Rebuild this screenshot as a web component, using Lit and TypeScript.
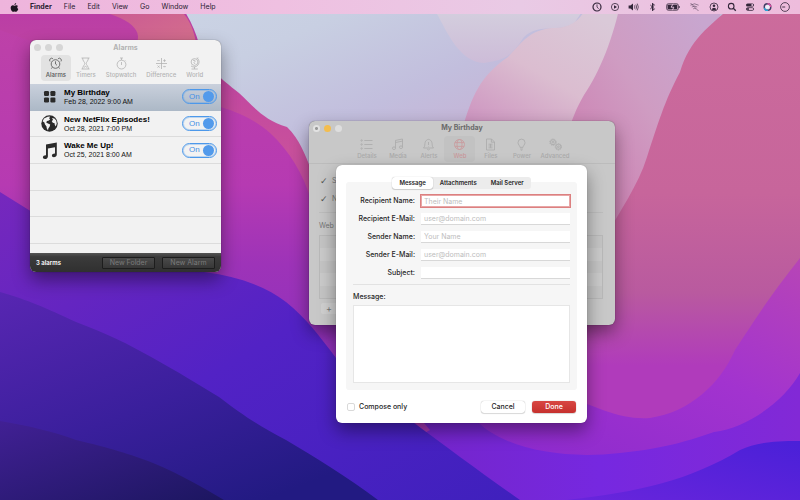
import { LitElement, html, svg, css } from "lit";
import { customElement, state } from "lit/decorators.js";
import { classMap } from "lit/directives/class-map.js";

const toolIcons: Record<string, unknown> = {
  alarms: svg`<circle cx="6.5" cy="7" r="4.3"/><path d="M6.5 4.3V7L8 8.3M3.4 10.2L2.4 11.6M9.6 10.2L10.6 11.6M1 4.4A2 2 0 0 1 3.9 1.7M9.1 1.7A2 2 0 0 1 12 4.4"/>`,
  timers: svg`<path d="M2.5 1H10.5M2.5 12H10.5M3.6 1C3.6 4 5.8 5 5.8 6.5C5.8 8 3.6 9 3.6 12M9.4 1C9.4 4 7.2 5 7.2 6.5C7.2 8 9.4 9 9.4 12M5 10.4L6.5 9.4L8 10.4"/>`,
  stopwatch: svg`<circle cx="6.5" cy="7.6" r="4.4"/><path d="M6.5 5V8M5 1H8M6.5 1V3M10 3.4L10.8 4.2"/>`,
  difference: svg`<path d="M6.5 1V12M1 6.5H12M2.2 3.6H4.8M8.2 3.6H10.8M9.5 2.3V4.9M2.6 8.6L4.6 10.6M4.6 8.6L2.6 10.6M8.2 9.6H10.8M9.5 8.3V8.4M9.5 10.9V11"/>`,
  world: svg`<circle cx="6.5" cy="5" r="3.4"/><path d="M9 .8A5 5 0 0 1 3 9M10 .5L9 1.7M6.5 9.8V12M3.5 12H9.8M5 3.5L6.3 3L7.2 4.2L6 5.4L7 7"/>`,
  details: svg`<path d="M4.3 2.5H12.5M4.3 6.5H12.5M4.3 10.5H12.5"/><circle cx="1.6" cy="2.5" r=".7"/><circle cx="1.6" cy="6.5" r=".7"/><circle cx="1.6" cy="10.5" r=".7"/>`,
  media: svg`<path d="M4.5 9.8V2.4L11.5 1V8.8M4.5 4.5L11.5 3.1"/><ellipse cx="3" cy="10.2" rx="1.6" ry="1.3"/><ellipse cx="10" cy="9.2" rx="1.6" ry="1.3"/>`,
  alerts: svg`<path d="M1.5 10C3.2 8.6 2.6 5.8 3.2 4.2C3.7 2.7 5 1.4 6.5 1.4S9.3 2.7 9.8 4.2C10.4 5.8 9.8 8.6 11.5 10ZM5.2 11.2Q6.5 12.6 7.8 11.2M6.5 4V7M6.5 8.2V8.6"/>`,
  web: svg`<circle cx="6.5" cy="6.5" r="5"/><ellipse cx="6.5" cy="6.5" rx="2.5" ry="5"/><path d="M2 4.6H11M2 8.4H11"/>`,
  files: svg`<path d="M2.5 1H7.6L10.5 4V12H2.5ZM7.4 1V4.2H10.5M4.5 6.2H8.5M4.5 8H8.5M4.5 9.8H8.5M6.5 6V9.8"/>`,
  power: svg`<path d="M5 9.4C5 7.6 3 6.8 3 4.6A3.5 3.5 0 0 1 10 4.6C10 6.8 8 7.6 8 9.4ZM5.2 11H7.8M5.8 12.2H7.2"/>`,
  advanced: svg`<circle cx="4" cy="4.2" r="2.5"/><circle cx="4" cy="4.2" r="3.2" stroke-dasharray="1.2 .8"/><circle cx="4" cy="4.2" r=".9"/><circle cx="9.4" cy="8.8" r="2.5"/><circle cx="9.4" cy="8.8" r="3.2" stroke-dasharray="1.2 .8"/><circle cx="9.4" cy="8.8" r=".9"/>`,
};

const alarmIcons: Record<string, unknown> = {
  grid: svg`<rect x="3" y="3" width="5" height="5" rx="1.2"/><rect x="9.4" y="3" width="5" height="5" rx="1.2"/><rect x="3" y="9.4" width="5" height="5" rx="1.2"/><rect x="9.4" y="9.4" width="5" height="5" rx="1.2"/>`,
  globe: svg`<circle cx="8.5" cy="8.5" r="8.2"/><path fill="#f2f2f2" d="M3 3.6L6.6 1.8L9 1.6L8.2 3.4L9.2 4.4L7.4 5.8L6 6L5.2 7.6L7 8.4L9.2 9.6L8.6 11.8L7.4 13.2L7 15.6L5.8 13.6L5.4 11.2L4 9.6L3.4 7.4L1.6 6.2ZM11 3L13.4 3.4L15.2 5.6L15.8 8.6L14.8 11.4L13.8 10L13.6 8.2L11.8 7.8L10.8 6.2L12 4.8Z"/>`,
  note: svg`<path d="M5 2.4L15.8.4V12.4C15.8 14.2 14.3 15.2 12.9 15.2C11.6 15.2 10.9 14.4 10.9 13.5C10.9 12.2 12.3 11.3 14 11.4V5.2L6.9 6.6V14.4C6.9 16.1 5.3 17 3.9 17C2.6 17 1.9 16.3 1.9 15.3C1.9 14 3.3 13.1 5 13.2Z"/>`,
};

interface StatusIcon { w: number; art: unknown }
const statusIcons: StatusIcon[] = [
  { w: 10, art: svg`<circle cx="5" cy="5" r="4" stroke-width="1.2"/><path d="M5 2.4V5L6.6 6.8"/>` },
  { w: 10, art: svg`<circle cx="5" cy="5" r="3.6"/><path class="solid" d="M4 3.3L7 5L4 6.7Z"/>` },
  { w: 11, art: svg`<path class="solid" d="M.6 3.6H2.4L5 1.4V8.6L2.4 6.4H.6Z"/><path d="M6.4 3.4Q7.4 5 6.4 6.6M7.9 2.5Q9.4 5 7.9 7.5M9.3 1.6Q11.3 5 9.3 8.4" stroke-width=".7"/>` },
  { w: 11, art: svg`<path d="M3.4 3.1L7.4 6.8L5.5 8.8V1.2L7.4 3.2L3.4 6.9" stroke-width="1"/>` },
  { w: 14, art: svg`<rect x=".7" y="1.8" width="11.6" height="6.4" rx="1.6" stroke-width=".8"/><rect class="solid" x="1.6" y="2.7" width="9.6" height="4.6" rx=".6"/><path d="M13.3 4V6"/><path d="M7.2 1.8L5 5.2H7.8L6.4 8.2" stroke="#ecc6e2" stroke-width=".9"/>` },
  { w: 13, art: svg`<g opacity=".6"><path d="M2.4 3.2Q6.5 .4 10.6 3.2M3.8 5Q6.5 3.2 9.2 5M5.2 6.8Q6.5 6 7.8 6.8M2.5 1L10.5 9"/></g>` },
  { w: 10, art: svg`<circle cx="5" cy="5" r="4"/><circle class="solid" cx="5" cy="3.8" r="1.3"/><path class="solid" d="M2.8 7.6Q3 5.8 5 5.8T7.2 7.6L5 8.6Z"/>` },
  { w: 10, art: svg`<circle cx="4.2" cy="4.2" r="2.8" stroke-width="1.1"/><path d="M6.3 6.3L8.8 8.8" stroke-width="1.3"/>` },
  { w: 10, art: svg`<rect class="solid" x="1" y="1.4" width="8" height="3.2" rx="1.6"/><circle cx="7.2" cy="3" r=".9" fill="#ecc6e2" stroke="none"/><rect x="1.4" y="5.7" width="7.2" height="2.7" rx="1.3"/><circle class="solid" cx="3" cy="7" r="1"/>` },
  { w: 9, art: svg`<circle cx="4.5" cy="5" r="3.3" stroke="#3d3d63" stroke-width="1.4"/><path d="M4.5 1.7A3.3 3.3 0 0 1 7.8 5" stroke="#d84fa0" stroke-width="1.4"/><path d="M1.3 6A3.3 3.3 0 0 0 5 8.3" stroke="#23a6d8" stroke-width="1.4"/><circle cx="4.5" cy="5" r="2" fill="#e8f4fb" stroke="none"/>` },
  { w: 10, art: svg`<circle cx="5" cy="5" r="4.4"/><path d="M2.2 5H5.2" stroke-width=".9"/>` },
];

const wallpaper = svg`
  <defs>
    <linearGradient id="sky" x1="0" y1="0" x2=".7" y2="1"><stop offset="0" stop-color="#ced8e7"/><stop offset=".22" stop-color="#c8cfe2"/><stop offset=".36" stop-color="#c2bedd"/><stop offset=".62" stop-color="#cba2ca"/></linearGradient>
    <linearGradient id="wedge" x1="0" y1="0" x2="0" y2="1"><stop offset="0" stop-color="#d5d2df"/><stop offset="1" stop-color="#cdbcd8"/></linearGradient>
    <linearGradient id="blush" x1=".6" y1="0" x2=".2" y2="1"><stop offset="0" stop-color="#dac9d8"/><stop offset=".3" stop-color="#dbbdd0"/><stop offset=".6" stop-color="#cd94c0"/></linearGradient>
    <linearGradient id="rose" x1=".8" y1="0" x2=".2" y2="1"><stop offset="0" stop-color="#c8a6cf"/><stop offset=".3" stop-color="#cf9cc2"/><stop offset=".7" stop-color="#cb78ad"/><stop offset="1" stop-color="#c065a0"/></linearGradient>
    <linearGradient id="ruby" x1="0" y1="0" x2="0" y2="1"><stop offset="0" stop-color="#cc6c9c"/><stop offset=".45" stop-color="#c7659b"/><stop offset=".68" stop-color="#b95a9f"/><stop offset=".85" stop-color="#b03bbb"/></linearGradient>
    <linearGradient id="orchid" x1="1" y1="0" x2=".3" y2="1"><stop offset="0" stop-color="#b745b6"/><stop offset=".45" stop-color="#a233cf"/><stop offset="1" stop-color="#8b2acd"/></linearGradient>
    <linearGradient id="violet" x1="0" y1="0" x2="1" y2="0"><stop offset="0" stop-color="#7425c8"/><stop offset=".5" stop-color="#7628e0"/><stop offset="1" stop-color="#8229d6"/></linearGradient>
    <linearGradient id="indigo" x1="0" y1="1" x2="1" y2="0"><stop offset="0" stop-color="#6925dc"/><stop offset="1" stop-color="#4a20d8"/></linearGradient>
    <linearGradient id="magenta" x1="0" y1="0" x2="0" y2="1"><stop offset="0" stop-color="#b93ca6"/><stop offset=".3" stop-color="#c8509c"/><stop offset="1" stop-color="#9c31ba"/></linearGradient>
    <linearGradient id="fuchsia" x1="0" y1="0" x2="0" y2="1"><stop offset="0" stop-color="#bd41a8"/><stop offset=".33" stop-color="#b63ab2"/><stop offset=".5" stop-color="#9d33b8"/><stop offset="1" stop-color="#7e2cc4"/></linearGradient>
    <linearGradient id="coral" x1="0" y1="0" x2="1" y2="1"><stop offset="0" stop-color="#cb5b93"/><stop offset="1" stop-color="#d6748a"/></linearGradient>
    <linearGradient id="blue1" x1="0" y1="0" x2="1" y2="1"><stop offset="0" stop-color="#7628bd"/><stop offset=".5" stop-color="#5222c5"/><stop offset="1" stop-color="#3f20bd"/></linearGradient>
    <linearGradient id="blue2" x1="0" y1="0" x2=".7" y2="1"><stop offset="0" stop-color="#5826b2"/><stop offset=".55" stop-color="#3a1f9c"/><stop offset="1" stop-color="#221a82"/></linearGradient>
    <linearGradient id="blue3" x1="0" y1="0" x2="1" y2="1"><stop offset="0" stop-color="#412094"/><stop offset="1" stop-color="#1c1660"/></linearGradient>
  </defs>
  <rect width="800" height="500" fill="url(#sky)"/>
  <path fill="url(#wedge)" d="M430 0L437 14C448 34 460 62 484 63C504 60 510 58 524 37C540 22 560 34 575 22L590 0Z"/>
  <path fill="url(#blush)" d="M590 0C580 24 568 28 552 28C530 30 522 42 508 57C480 76 472 96 462 130V260H640V0Z"/>
  <path fill="url(#rose)" d="M621 0C614 36 600 72 584 95C574 112 568 130 560 160V420H720V0Z"/>
  <path fill="url(#ruby)" d="M740 0C706 28 690 40 680 72C664 102 658 124 647 157C638 186 620 210 604 240C585 290 570 340 560 420L800 430V0Z"/>
  <path fill="url(#orchid)" d="M800 258C770 296 756 318 735 350C720 384 690 412 650 418C620 420 600 408 560 394L470 400V500H800Z"/>
  <path fill="url(#violet)" d="M800 373C785 400 748 428 714 432C690 440 668 448 620 453C560 460 500 448 474 418L400 410V500H800Z"/>
  <path fill="url(#indigo)" d="M800 441C770 441 755 443 740 450C690 480 640 492 566 500H800Z"/>
  <path fill="url(#magenta)" d="M0 0H176C192 18 198 38 204 62C220 78 230 86 239 93C255 108 264 120 287 127C300 140 304 152 312 172C340 240 350 340 430 430L300 500H0Z"/>
  <path fill="url(#coral)" d="M120 14H184C192 24 196 36 199 60H120C150 40 140 24 110 14Z"/>
  <path fill="url(#fuchsia)" d="M0 30C80 60 160 80 221 107C250 116 268 128 284 148C300 168 310 190 316 220C332 310 360 380 440 445L300 500H0Z"/>
  <path fill="url(#blue1)" d="M0 192C60 230 120 268 204 272C236 276 266 286 286 302C306 318 318 334 336 358C362 388 390 404 414 423C448 448 480 472 520 500H0Z"/>
  <path fill="url(#blue2)" d="M0 292C28 300 46 308 76 322C108 334 128 344 153 358C178 372 198 384 219 397C244 416 262 428 286 440C316 458 346 476 378 500H0Z"/>
  <path fill="url(#blue3)" d="M0 421C30 426 54 432 76 440C110 448 130 454 153 463C180 474 204 488 224 500H0Z"/>
`;

const toolIcon = (name: string) =>
  html`<svg class="tool-icon" viewBox="0 0 13 13" aria-hidden="true">${toolIcons[name]}</svg>`;

@customElement("app-root")
export class AppRoot extends LitElement {
  @state() private mailTab = "Message";

  private menus = ["File", "Edit", "View", "Go", "Window", "Help"];
  private alarmTools = ["Alarms", "Timers", "Stopwatch", "Difference", "World"];
  private eventTools = ["Details", "Media", "Alerts", "Web", "Files", "Power", "Advanced"];
  private alarms = [
    { icon: "grid", name: "My Birthday", when: "Feb 28, 2022 9:00 AM" },
    { icon: "globe", name: "New NetFlix Episodes!", when: "Oct 28, 2021 7:00 PM" },
    { icon: "note", name: "Wake Me Up!", when: "Oct 25, 2021 8:00 AM" },
  ];
  private fields = [
    { id: "rname", label: "Recipient Name:", hint: "Their Name" },
    { id: "rmail", label: "Recipient E-Mail:", hint: "user@domain.com" },
    { id: "sname", label: "Sender Name:", hint: "Your Name" },
    { id: "smail", label: "Sender E-Mail:", hint: "user@domain.com" },
    { id: "subject", label: "Subject:", hint: "" },
  ];

  static styles = css`
    :host { display: block; font: 7px/10px Inter, "Liberation Sans", sans-serif; color: #222; }
    * { box-sizing: border-box; }
    button, input, textarea { font: inherit; color: inherit; margin: 0; padding: 0; border: 0; background: none; outline: 0; }
    .desktop { position: relative; min-height: 100vh; overflow: hidden; }
    .wallpaper { position: absolute; inset: 0; width: 100%; height: 100%; }
    .menubar { position: relative; display: flex; justify-content: space-between; align-items: center; height: 14px; padding: 0 10px;
      background: linear-gradient(90deg, #eeb4dc, #efc0e1 35%, #e9cae5 65%, #eebcdc); color: #2a2030; }
    .menus { display: flex; align-items: center; gap: 12px; }
    .menus button { font-weight: 400; }
    .menus .app { font-weight: 700; margin-left: -1px; }
    .apple { width: 9px; height: 9px; fill: #1c1420; }
    .status { display: flex; gap: 8px; }
    .status svg { height: 10px; fill: none; stroke: #33263a; stroke-width: .8; }
    .status .solid { fill: #33263a; stroke: none; }

    .window { position: absolute; border-radius: 6px; box-shadow: 0 0 1px rgba(0,0,0,.6), 0 8px 18px rgba(0,0,0,.42); }
    .titlebar { display: grid; grid-template-columns: 1fr auto 1fr; align-items: center; height: 14px; padding: 0 4px; }
    .title { margin: 0; font-size: 7px; line-height: 10px; font-weight: 700; }
    .lights { display: flex; gap: 4px; }
    .light { width: 7px; height: 7px; border-radius: 50%; background: #d6d6d6; }
    .tools { display: flex; justify-content: center; }
    .tool { display: flex; flex-direction: column; align-items: center; gap: 1px; height: 26px; padding: 2px 5px 0; border-radius: 4px; font-size: 6px; line-height: 8px; font-weight: 500; }
    .tool-icon { width: 13px; height: 13px; fill: none; stroke: currentColor; stroke-width: .8; }

    .alarms { left: 30px; top: 40px; width: 191px; overflow: hidden; background: #f2f2f2; }
    .alarms .titlebar { height: 15px; }
    .alarms .title, .alarms .tool { color: #b3b3b3; }
    .alarms .tools { height: 29px; padding-right: 2px; }
    .alarms .tool.current { background: #e2e2e2; color: #555; }
    .list { display: flex; flex-direction: column; height: 169px; margin: 0; padding: 0; list-style: none; }
    .row { flex: 1; display: flex; align-items: center; gap: 6px; padding: 0 4px 0 11px; border-bottom: 1px solid #dcdcdc; }
    .row.selected { background: linear-gradient(#c9d0dc, #adb9c7); border-color: #adb9c7; }
    .row.stub { flex: 0 0 9px; border: 0; }
    .alarm-icon { width: 17px; height: 17px; fill: #2a2a2a; }
    .about { flex: 1; font: 7px/9px "Liberation Sans", sans-serif; color: #111; }
    .about strong { display: block; font-size: 8px; color: #000; }
    .switch { display: flex; align-items: center; justify-content: space-between; width: 35px; height: 15px; padding: 0 2px 0 6px; border: 1px solid #4c98ea;
      border-radius: 8px; box-shadow: inset 0 0 0 1px rgba(90,160,235,.35); color: #4590e6; font: 8px/10px "Liberation Sans", sans-serif; }
    .switch input { appearance: none; width: 11px; height: 11px; border-radius: 50%; background: #529aeb; }
    .statusbar { display: flex; align-items: center; gap: 7px; height: 19px; padding: 1px 6px 0; background: linear-gradient(#555, #3b3b3b 20%, #303030); color: #fff; font-size: 6px; font-weight: 600; }
    .statusbar span { flex: 1; }
    .statusbar button { width: 53px; height: 12px; border: 1px solid #1d1d1d; border-radius: 1px; background: linear-gradient(#4a4a4a, #373737); color: #7b7b7b; font-size: 7px; font-weight: 400; white-space: nowrap; }

    .event { left: 309px; top: 121px; width: 306px; height: 204px; background: #c8c8c8; color: #777; }
    .event .title { color: #6a6a6a; }
    .event .light { background: #dedede; }
    .event .light.mid { background: #f3bd4e; }
    .event .light.dot { background: radial-gradient(circle, #999 1px, #e2e2e2 2px); }
    .event .tools { height: 29px; padding: 1px 4px 0; border-bottom: 1px solid #bcbcbc; }
    .event .tool { min-width: 31px; padding: 2px 3px 0; color: #aaa; }
    .event .tool.current { background: #c2c2c2; color: #c9989b; }
    .event-body { display: flex; flex-direction: column; gap: 8px; padding: 12px 12px 0 10px; }
    .option { display: flex; align-items: center; gap: 4px; height: 10px; padding-left: 1px; }
    .option input { appearance: none; width: 8px; height: 8px; color: #555; }
    .option input::before { content: "✓"; display: block; font: 700 9px/8px "DejaVu Sans", sans-serif; }
    .event hr { width: 100%; margin: 0; border: 0; border-top: 1px solid #bdbdbd; }
    .actions-list { display: flex; flex-direction: column; gap: 4px; }
    .stripes { height: 64px; border: 1px solid #b9b9b9; background: repeating-linear-gradient(#c5c5c5 0 12px, #cbcbcb 12px 25px); }
    .event .add { width: 18px; height: 11px; margin-left: 2px; border-radius: 2px; background: #d0d0d0; font-size: 9px; text-align: left; padding-left: 5px; }
    .web-title { margin: 0; }

    .sheet { position: absolute; left: 27px; right: 28px; top: 44px; padding: 12px 10px 10px; border-radius: 6px; background: #fff; color: #262626;
      display: flex; flex-direction: column; box-shadow: 0 0 1px rgba(0,0,0,.35), 0 8px 18px rgba(0,0,0,.4); }
    .tabs { position: relative; align-self: center; display: flex; height: 12px; margin-bottom: -7px; border-radius: 3px; background: #ececec; }
    .tab { padding: 0 7px; border-radius: 3px; font-size: 6px; font-weight: 600; color: #262626; }
    .tab.current { background: #fff; box-shadow: 0 0 1px rgba(0,0,0,.3), 0 1px 1px rgba(0,0,0,.15); }
    .panel { padding: 13px 7px 7px; border-radius: 3px; background: #f6f6f6; }
    .form { display: grid; grid-template-columns: 1fr 149px; column-gap: 6px; row-gap: 6px; align-items: center; padding-bottom: 5px; border-bottom: 1px solid #e2e2e2; }
    .form label { text-align: right; font-weight: 500; }
    .form input { width: 100%; height: 12px; padding: 0 3px; background: #fff; border-bottom: 1px solid #d8d8d8; }
    .form input.focused { border-bottom: 0; box-shadow: 0 0 0 1px #dc8080, inset 0 0 0 1px #e8a6a6; }
    .form input::placeholder { color: #bdbdbd; opacity: 1; }
    .note-label { display: block; margin: 7px 0 3px; font-weight: 500; }
    .note { display: block; width: 100%; height: 78px; border: 1px solid #e6e6e6; background: #fff; resize: none; }
    .actions { display: flex; align-items: center; gap: 7px; padding: 11px 1px 0; }
    .compose { flex: 1; display: flex; align-items: center; gap: 4px; font-weight: 500; }
    .compose input { appearance: none; width: 8px; height: 8px; border: 1px solid #d9d9d9; border-radius: 2px; background: #fff; }
    .push { width: 44px; height: 12px; border-radius: 3px; background: #fff; box-shadow: 0 0 1px rgba(0,0,0,.4), 0 1px 1px rgba(0,0,0,.12); font-weight: 500; }
    .push.primary { background: linear-gradient(#d84743, #c6302d); color: #fff; }
  `;

  private tools(names: string[], current: string) {
    return html`<nav class="tools">${names.map(n => html`
      <button class=${classMap({ tool: true, current: n === current })}>${toolIcon(n.toLowerCase())}<span>${n}</span></button>`)}</nav>`;
  }

  private menuBar() {
    return html`<header class="menubar">
      <nav class="menus">
        <svg class="apple" viewBox="0 0 12 12" aria-label="Apple menu"><path d="M8.2 0C8.3 1.3 7.2 2.7 5.9 2.7C5.8 1.4 7 .1 8.2 0ZM10.6 4C9.2 4.9 9.3 7.2 11 7.9C10.6 9.3 9.4 11.8 8.1 11.8C7.3 11.8 7 11.3 6.1 11.3C5.2 11.3 4.9 11.8 4.1 11.8C2.6 11.8 .9 8.8 .9 6.6C.9 4.4 2.3 3.1 3.8 3.1C4.8 3.1 5.4 3.7 6.1 3.7C6.8 3.7 7.5 3 8.7 3C9.4 3 10.2 3.4 10.6 4Z"/></svg>
        <button class="app">Finder</button>
        ${this.menus.map(m => html`<button>${m}</button>`)}
      </nav>
      <div class="status">${statusIcons.map(i => html`<svg width=${i.w} viewBox="0 0 ${i.w} 10" aria-hidden="true">${i.art}</svg>`)}</div>
    </header>`;
  }

  private alarmsWindow() {
    return html`<section class="window alarms">
      <div class="titlebar">
        <div class="lights"><span class="light"></span><span class="light"></span><span class="light"></span></div>
        <h2 class="title">Alarms</h2>
      </div>
      ${this.tools(this.alarmTools, "Alarms")}
      <ul class="list">
        ${this.alarms.map((a, i) => html`<li class=${classMap({ row: true, selected: i === 0 })}>
          <svg class="alarm-icon" viewBox="0 0 17 17" aria-hidden="true">${alarmIcons[a.icon]}</svg>
          <div class="about"><strong>${a.name}</strong>${a.when}</div>
          <label class="switch">On<input type="checkbox" checked></label>
        </li>`)}
        <li class="row"></li><li class="row"></li><li class="row"></li><li class="row stub"></li>
      </ul>
      <footer class="statusbar"><span>3 alarms</span><button>New Folder</button><button>New Alarm</button></footer>
    </section>`;
  }

  private sheet() {
    return html`<form class="sheet" @submit=${(e: Event) => e.preventDefault()}>
      <div class="tabs">${["Message", "Attachments", "Mail Server"].map(t => html`
        <button type="button" class=${classMap({ tab: true, current: t === this.mailTab })} @click=${() => (this.mailTab = t)}>${t}</button>`)}</div>
      <div class="panel">
        <div class="form">${this.fields.map((f, i) => html`
          <label for=${f.id}>${f.label}</label>
          <input id=${f.id} class=${classMap({ focused: i === 0 })} placeholder=${f.hint}>`)}</div>
        <label class="note-label" for="note">Message:</label>
        <textarea id="note" class="note"></textarea>
      </div>
      <div class="actions">
        <label class="compose"><input type="checkbox">Compose only</label>
        <button type="button" class="push">Cancel</button>
        <button class="push primary">Done</button>
      </div>
    </form>`;
  }

  private eventWindow() {
    return html`<section class="window event">
      <div class="titlebar">
        <div class="lights"><span class="light dot"></span><span class="light mid"></span><span class="light"></span></div>
        <h2 class="title">My Birthday</h2>
      </div>
      ${this.tools(this.eventTools, "Web")}
      <div class="event-body">
        <label class="option"><input type="checkbox" checked>S</label>
        <label class="option"><input type="checkbox" checked>N</label>
        <hr>
        <div class="actions-list">
          <p class="web-title">Web</p>
          <div class="stripes"></div>
          <button class="add">+</button>
        </div>
      </div>
      ${this.sheet()}
    </section>`;
  }

  render() {
    return html`<main class="desktop">
      <svg class="wallpaper" viewBox="0 0 800 500" preserveAspectRatio="none" aria-hidden="true">${wallpaper}</svg>
      ${this.menuBar()} ${this.alarmsWindow()} ${this.eventWindow()}
    </main>`;
  }
}
